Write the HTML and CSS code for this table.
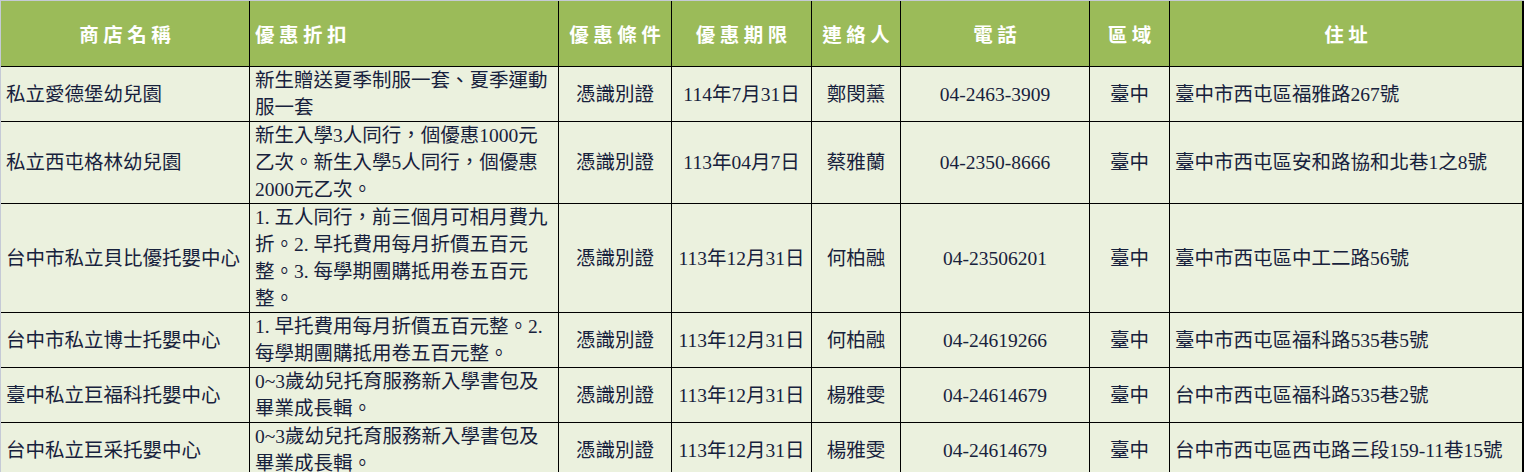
FILE: index.html
```html
<!DOCTYPE html>
<html lang="zh-Hant">
<head>
<meta charset="utf-8">
<title>特約商店優惠</title>
<link rel="stylesheet" href="styles.css">
</head>
<body>
<div class="sheet">
<table class="grid">
<colgroup>
<col class="c-name"><col class="c-disc"><col class="c-cond"><col class="c-date"><col class="c-contact"><col class="c-phone"><col class="c-area"><col class="c-addr">
</colgroup>
<thead>
<tr class="r-head">
<th class="ctr">商店名稱</th>
<th class="lft">優惠折扣</th>
<th class="ctr">優惠條件</th>
<th class="ctr">優惠期限</th>
<th class="ctr">連絡人</th>
<th class="ctr">電話</th>
<th class="ctr">區域</th>
<th class="ctr last">住址</th>
</tr>
</thead>
<tbody>
<tr class="r2">
<td class="lft">私立愛德堡幼兒園</td>
<td class="lft">新生贈送夏季制服一套、夏季運動<br>服一套</td>
<td class="ctr">憑識別證</td>
<td class="ctr">114年7月31日</td>
<td class="ctr">鄭閔薰</td>
<td class="ctr">04-2463-3909</td>
<td class="ctr">臺中</td>
<td class="lft last">臺中市西屯區福雅路267號</td>
</tr>
<tr class="r3">
<td class="lft">私立西屯格林幼兒園</td>
<td class="lft">新生入學3人同行，個優惠1000元<br>乙次。新生入學5人同行，個優惠<br>2000元乙次。</td>
<td class="ctr">憑識別證</td>
<td class="ctr">113年04月7日</td>
<td class="ctr">蔡雅蘭</td>
<td class="ctr">04-2350-8666</td>
<td class="ctr">臺中</td>
<td class="lft last">臺中市西屯區安和路協和北巷1之8號</td>
</tr>
<tr class="r4">
<td class="lft">台中市私立貝比優托嬰中心</td>
<td class="lft">1. 五人同行，前三個月可相月費九<br>折。2. 早托費用每月折價五百元<br>整。3. 每學期團購抵用卷五百元<br>整。</td>
<td class="ctr">憑識別證</td>
<td class="ctr">113年12月31日</td>
<td class="ctr">何柏融</td>
<td class="ctr">04-23506201</td>
<td class="ctr">臺中</td>
<td class="lft last">臺中市西屯區中工二路56號</td>
</tr>
<tr class="r2">
<td class="lft">台中市私立博士托嬰中心</td>
<td class="lft">1. 早托費用每月折價五百元整。2.<br>每學期團購抵用卷五百元整。</td>
<td class="ctr">憑識別證</td>
<td class="ctr">113年12月31日</td>
<td class="ctr">何柏融</td>
<td class="ctr">04-24619266</td>
<td class="ctr">臺中</td>
<td class="lft last">臺中市西屯區福科路535巷5號</td>
</tr>
<tr class="r2">
<td class="lft">臺中私立巨福科托嬰中心</td>
<td class="lft">0~3歲幼兒托育服務新入學書包及<br>畢業成長輯。</td>
<td class="ctr">憑識別證</td>
<td class="ctr">113年12月31日</td>
<td class="ctr">楊雅雯</td>
<td class="ctr">04-24614679</td>
<td class="ctr">臺中</td>
<td class="lft last">台中市西屯區福科路535巷2號</td>
</tr>
<tr class="r2">
<td class="lft">台中私立巨采托嬰中心</td>
<td class="lft">0~3歲幼兒托育服務新入學書包及<br>畢業成長輯。</td>
<td class="ctr">憑識別證</td>
<td class="ctr">113年12月31日</td>
<td class="ctr">楊雅雯</td>
<td class="ctr">04-24614679</td>
<td class="ctr">臺中</td>
<td class="lft last">台中市西屯區西屯路三段159-11巷15號</td>
</tr>
</tbody>
</table>
</div>
</body>
</html>
```

FILE: styles.css
```css
html, body {
  margin: 0;
  padding: 0;
  background: #ebf1de;
}

.sheet {
  border-top: 1px solid #c5cad6;
  border-left: 1px solid #c5cad6;
  width: 1523px;
  overflow: hidden;
}

.grid {
  border-collapse: separate;
  border-spacing: 0;
  table-layout: fixed;
  width: 1523px;
  font-family: "Liberation Serif", "Noto Sans CJK TC", serif;
  font-size: 19.5px;
  line-height: 27px;
  color: #17213c;
}

.c-name { width: 249px; }
.c-disc { width: 309px; }
.c-cond { width: 113px; }
.c-date { width: 140px; }
.c-contact { width: 89px; }
.c-phone { width: 189px; }
.c-area { width: 80px; }
.c-addr { width: 354px; }

.grid th,
.grid td {
  border-right: 1px solid #000;
  border-bottom: 1px solid #000;
  padding: 0 0 0 5px;
  vertical-align: middle;
  white-space: nowrap;
  overflow: visible;
}

.grid td {
  background: #ebf1de;
}

.grid th {
  background: #9bbb59;
  color: #ffffff;
  font-weight: bold;
  letter-spacing: 4.5px;
  padding-top: 4px;
}

.grid th.ctr {
  padding-left: 4.5px;
}

.grid .last {
  border-right-width: 2px;
}

.ctr { text-align: center; padding-left: 0; }
.grid td.ctr { padding: 0; }
.lft { text-align: left; }

.r-head { height: 66px; }
.r2 { height: 54px; }
.r3 { height: 81px; }
.r4 { height: 108px; }
```
